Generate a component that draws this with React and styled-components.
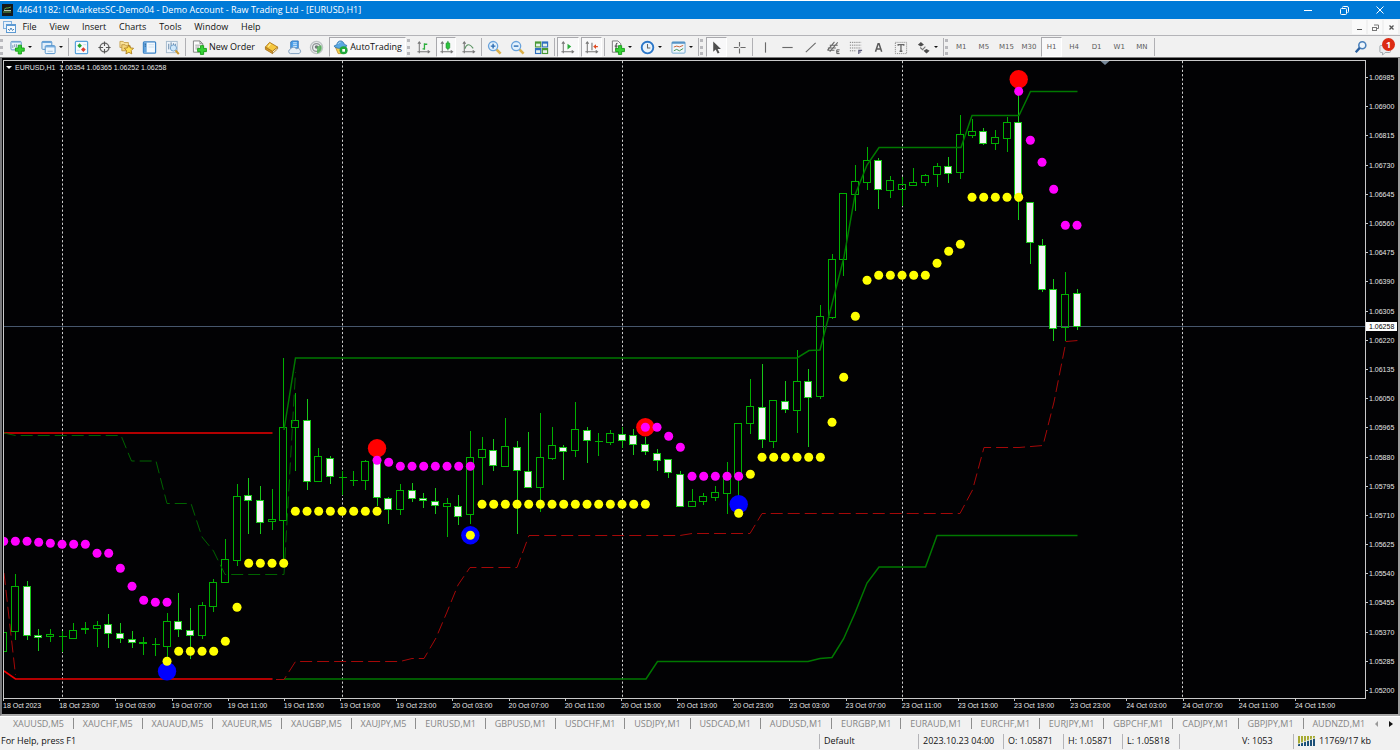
import React from "react";
import styled, { createGlobalStyle, css } from "styled-components";

const GlobalStyle = createGlobalStyle`
  *, *::before, *::after { box-sizing: border-box; }
  html, body, #root { margin: 0; padding: 0; }
  body {
    background: #f1f1f1;
    color: #111;
    font-family: "Open Sans", "Noto Sans", sans-serif;
    font-size: 9px;
    line-height: 12px;
  }
  button {
    margin: 0;
    padding: 0;
    border: 0;
    background: none;
    color: inherit;
    font: inherit;
  }
  svg { display: block; flex: none; }
`;

/* ---------- layout ---------- */

const Window = styled.div`
  display: flex;
  flex-direction: column;
  min-height: 100vh;
  overflow: hidden;
`;

const TitleBar = styled.header`
  display: flex;
  align-items: center;
  height: 19px;
  padding-left: 2px;
  border-top: 1px solid #fff;
  background: #007ad7;
  color: #fff;
  white-space: nowrap;
`;

const Title = styled.h1`
  flex: 1;
  margin: 0 0 0 4px;
  font-size: 9px;
  font-weight: 400;
`;

const WindowButtons = styled.div`
  display: flex;
  padding-right: 2px;
`;

const WindowButton = styled.button`
  display: flex;
  align-items: center;
  justify-content: center;
  width: 36px;
  height: 17px;
`;

const MenuBar = styled.nav`
  display: flex;
  align-items: center;
  height: 17px;
  padding-left: 3px;
  border-bottom: 1px solid #b4b4b8;
`;

const MenuItem = styled.button`
  flex: 1 1 auto;
  height: 16px;
`;

const MdiButton = styled.button`
  display: flex;
  align-items: center;
  justify-content: center;
  width: 14px;
  height: 14px;
  margin-right: 2px;
  background: #fafafa;
`;

const Toolbar = styled.div`
  display: flex;
  align-items: stretch;
  height: 22px;
  border-bottom: 1px solid #7a7a7a;
  background: #f1f1f1;
`;

const Grip = styled.span`
  width: 5px;
  margin: 3px 0 2px;
  border-left: 3px dotted #b9b9bd;
  border-right: 2px solid transparent;
`;

const Group = styled.div`
  display: flex;
  align-items: stretch;
  flex: 0 0 ${(p) => p.$width}px;
`;

const Divider = styled.span`
  width: 1px;
  margin: 2px 1px 1px 1px;
  background: #b0b0b4;
`;

const Spacer = styled.span`
  flex: 1;
`;

const Tool = styled.button`
  display: flex;
  align-items: center;
  justify-content: center;
  flex: 1 1 0;
  min-width: 0;
  gap: 2px;
  margin: 1px 1px 0;
  white-space: nowrap;
  border: 1px solid transparent;
  ${(p) =>
    p.$pressed &&
    css`
      border-color: #a9a9ad #fff #fff #a9a9ad;
      background: #f8f8f9;
    `}
`;

const SplitTool = styled(Tool)`
  gap: 3px;
  &::after {
    content: "";
    border: 2px solid transparent;
    border-top-color: #111;
    border-bottom: 0;
  }
`;

const Period = styled(Tool)`
  color: #5c5c5c;
  font-family: "DejaVu Sans", sans-serif;
  font-size: 7px;
`;

const Notifications = styled.button`
  position: relative;
  width: 26px;
  padding: 4px 0 0 5px;
`;

const Badge = styled.span`
  position: absolute;
  top: 2px;
  right: 5px;
  width: 13px;
  height: 13px;
  border-radius: 50%;
  background: #dc2a12;
  color: #fff;
  font-weight: 700;
  line-height: 13px;
  text-align: center;
`;

const ChartWindow = styled.main`
  display: grid;
  grid-template-columns: 1fr 32px;
  grid-template-rows: 1fr 15px;
  flex: 1;
  min-height: 0;
  padding: 2px 0 0 1px;
  border-left: 2px solid #77777a;
  border-right: 2px solid #9a9a9a;
  border-bottom: 2px solid #a8a8a8;
  background: #020204;
  color: #e6e6e6;
  font-family: "Liberation Sans", Arial, sans-serif;
  font-size: 7px;
  line-height: 9px;
`;

const Plot = styled.section`
  position: relative;
  min-height: 320px;
  border: 1px solid #c9c9c9;
`;

const PlotSvg = styled.svg`
  position: absolute;
  inset: 0;
  width: 100%;
  height: 100%;
`;

const PlotCaption = styled.div`
  position: absolute;
  top: 2px;
  left: 2px;
  display: flex;
  align-items: center;
  gap: 3px;
  white-space: pre;
  &::before {
    content: "";
    border: 3px solid transparent;
    border-top-color: #fff;
    border-bottom: 0;
  }
`;

const PriceAxis = styled.div`
  position: relative;
  grid-row: 1 / span 2;
  grid-column: 2;
  display: flex;
  flex-direction: column;
  padding: 3px 0 9px;
`;

const Price = styled.span`
  display: flex;
  align-items: center;
  flex: 1;
  gap: 1px;
  &::before {
    content: "";
    width: 2px;
    height: 1px;
    background: #c9c9c9;
  }
`;

const PriceTag = styled.strong`
  position: absolute;
  top: 40%;
  left: 0;
  right: 1px;
  padding-left: 3px;
  background: #fff;
  color: #000;
  font-weight: 400;
`;

const TimeAxis = styled.div`
  display: flex;
  padding-right: 15px;
`;

const Time = styled.span`
  flex: 1 1 0;
  min-width: 0;
  white-space: nowrap;
  &::before {
    content: "";
    display: block;
    width: 1px;
    height: 2px;
    background: #c9c9c9;
  }
`;

const ChartTabs = styled.nav`
  display: flex;
  align-items: center;
  height: 16px;
  padding: 0 0 2px 4px;
  border-top: 1px solid #fff;
  color: #858585;
  white-space: nowrap;
`;

const TabList = styled.div`
  display: flex;
  flex: 1;
`;

const ChartTab = styled.button`
  flex: 1 1 auto;
  height: 11px;
  line-height: 11px;
  border-right: 1px solid #8e8e8e;
  &:last-of-type { border-right: 0; }
`;

const TabArrows = styled.div`
  display: flex;
  gap: 11px;
  padding-right: 7px;
`;

const TabArrow = styled.button`
  width: 4px;
  height: 6px;
`;

const StatusBar = styled.footer`
  display: flex;
  align-items: center;
  height: 18px;
  padding-left: 1px;
  white-space: nowrap;
`;

const Status = styled.span`
  display: flex;
  align-items: center;
  gap: 3px;
  flex: 0 0 ${(p) => p.$width}px;
  height: 15px;
  padding-left: ${(p) => (p.$indent ? 62 : 4)}px;
  border-left: 1px solid #b4b4b8;
`;

const StatusHelp = styled.span`
  flex: 1;
`;

/* ---------- icons ---------- */

const Icon = ({ size = 15, children }) => (
  <svg width={size} height={size} viewBox="0 0 16 16" fill="none" aria-hidden="true">
    {children}
  </svg>
);

const plus = (x, y) => (
  <path
    d={`M${x + 3} ${y}h3.400v3h3v3.400h-3v3h-3.400v-3h-3v-3.400h3z`}
    fill="#35d035"
    stroke="#0f9a0f"
    strokeWidth="0.9"
  />
);

const NewChartIcon = () => (
  <Icon>
    <rect x="1" y="1.500" width="11" height="9" rx="1" fill="#eaf3fb" stroke="#5b93c4" />
    <path d="M1.500 2.500h10" stroke="#8dbbe2" />
    <path d="M3 8.500V5.500M5 7.500V4.500M7 7.500V4.500" stroke="#7c96ae" />
    {plus(5.800, 5.500)}
  </Icon>
);
const ProfilesIcon = () => (
  <Icon>
    <rect x="1" y="1.500" width="10.500" height="8.500" rx="1" fill="#e3effa" stroke="#4e8fc9" />
    <path d="M1 2.500h10.500" stroke="#6ba6dc" strokeWidth="1.400" />
    <rect x="4.500" y="6" width="10.500" height="8.500" rx="1" fill="#eef6fd" stroke="#4e8fc9" />
    <path d="M4.500 7.200h10.500" stroke="#6ba6dc" strokeWidth="1.400" />
    <path d="M7 12h5.500" stroke="#9db9d2" />
  </Icon>
);
const MarketWatchIcon = () => (
  <Icon>
    <rect x="1.500" y="1.500" width="13" height="13" rx="1" fill="#f6fafd" stroke="#5ba3dc" strokeWidth="1.300" />
    <path d="M3.500 6L6 3.500l2.500 2.500L6 8.500z" fill="#22a52c" />
    <path d="M7.500 10.200L10 7.700l2.500 2.500-2.500 2.500z" fill="#e23d2d" />
    <path d="M10 5h3M3.500 11h2.500" stroke="#c5d7e6" />
  </Icon>
);
const TargetIcon = () => (
  <Icon>
    <circle cx="8" cy="8" r="4.700" stroke="#666" strokeWidth="1.500" />
    <path d="M8 1.500v5M8 9.500v5M1.500 8h5M9.500 8h5" stroke="#555" strokeWidth="1.200" />
  </Icon>
);
const NavigatorIcon = () => (
  <Icon>
    <path d="M1 1.500h3.500l1 1.200h4.500v5.300H1z" fill="#f9e29a" stroke="#c49c48" strokeWidth=".9" />
    <path d="M3 5h3.500l1 1.200H12v5.300H3z" fill="#f6d67a" stroke="#b98f3c" strokeWidth=".9" />
    <path d="M10.500 5.200l1.500 3.200 3.500.4-2.500 2.500.6 3.500-3.100-1.700-3.100 1.700.6-3.500L5.500 8.800l3.500-.4z" fill="#ffe052" stroke="#a87717" strokeWidth=".9" />
  </Icon>
);
const TerminalIcon = () => (
  <Icon>
    <rect x="1.500" y="2" width="13" height="12" rx="1" fill="#f3f9fe" stroke="#3d84c6" strokeWidth="1.300" />
    <path d="M2 2.500h3v11H2z" fill="#62a3dd" />
    <path d="M3 4.500h1M3 6.500h1" stroke="#173f68" />
    <path d="M7 5h6M7 7.500h6" stroke="#cfe0ef" />
  </Icon>
);
const TesterIcon = () => (
  <Icon>
    <rect x="1.500" y="1.500" width="11.500" height="12" fill="#eff5fb" stroke="#a5bacd" />
    <path d="M4 10V4M6.500 7V2.500M9 7V3.500M11 7V4" stroke="#5d80a2" />
    <circle cx="9" cy="8.500" r="3.300" fill="#cfe8fb" stroke="#6f9fca" />
    <path d="M11.300 11l3.400 4" stroke="#c8962e" strokeWidth="2.200" />
  </Icon>
);
const OrderIcon = () => (
  <Icon>
    <path d="M1.500 1h7l3 3v9h-10z" fill="#fbfbfb" stroke="#808080" />
    <path d="M8.500 1v3h3" stroke="#808080" />
    <path d="M3.500 5.500h5M3.500 7.500h4M3.500 9.500h3" stroke="#8b8b8b" strokeWidth=".8" />
    {plus(6, 6)}
  </Icon>
);
const BookIcon = () => (
  <Icon>
    <path d="M1.500 7.500v2.500l7.500 4.500V12z" fill="#d99a25" stroke="#9c6a16" strokeWidth=".8" />
    <path d="M9 12v2.500l5.500-5V7.500z" fill="#fdf3cf" stroke="#9c6a16" strokeWidth=".8" />
    <path d="M1.500 7.500L6 2.500l8.500 5L9 12z" fill="#f6c83e" stroke="#a8731a" strokeWidth=".9" />
    <path d="M4.500 7L7 4.200" stroke="#fdeaa6" strokeWidth="1.200" />
  </Icon>
);
const CloudIcon = () => (
  <Icon>
    <path d="M4 2l1.500-1H12v8H4z" fill="#4da0ea" stroke="#2b71b8" strokeWidth=".9" />
    <path d="M6.500 3h4M6.500 5h4M6.500 7h4" stroke="#dceefd" />
    <path d="M3.500 14.500a2.400 2.400 0 0 1 0-4.600 3.500 3.500 0 0 1 6.300-.6 2.700 2.700 0 0 1 3.200 5.200z" fill="#e8eff6" stroke="#7b9cbd" />
  </Icon>
);
const SignalIcon = () => (
  <Icon>
    <circle cx="8" cy="8" r="6.500" stroke="#bfc3c5" strokeWidth="1.400" fill="#eceeee" />
    <circle cx="8" cy="8" r="4.200" stroke="#8d9296" strokeWidth="1.300" />
    <circle cx="8" cy="7.500" r="1.900" fill="#6f7a78" />
    <path d="M8.500 7.500A6 6 0 0 1 13 5.500c1.500 3.500.5 7-4.500 9z" fill="#4fb054" opacity=".8" />
  </Icon>
);
const AutoIcon = () => (
  <Icon>
    <path d="M2.500 7.500h10.500l-2 7H5.500z" fill="#f3cc52" stroke="#b98b22" strokeWidth=".8" />
    <path d="M1 6.500L4 5c.5-2.500 2-4 4-4s3.500 1.500 4 3.500l3 1.500c-2 3-11 4.500-14 .5z" fill="#5aa9e2" stroke="#2a6ea9" strokeWidth=".8" />
    <path d="M5.500 4c.5-1 1.500-1.700 2.500-1.700" stroke="#d0e8f8" />
    <circle cx="11.300" cy="11" r="4.300" fill="#1fa83a" />
    <path d="M9.900 9.600h2.900v2.900H9.900z" fill="#fff" />
  </Icon>
);
const Axes = () => (
  <path d="M3.500 2v12M1.500 12.500h13M2 4l1.500-2L5 4M12.500 11l2 1.500-2 1.500" stroke="#777" strokeWidth="1.100" />
);
const BarsIcon = () => (
  <Icon><Axes /><path d="M9 10.500V3.500M7 9.500h2M9 4.500h3" stroke="#2cae3c" strokeWidth="1.400" /></Icon>
);
const CandlesIcon = () => (
  <Icon><Axes /><path d="M9.500 1v10" stroke="#178a26" /><rect x="7.500" y="3" width="4" height="6" rx="1" fill="#2cc43e" stroke="#178a26" strokeWidth=".6" /></Icon>
);
const LineIcon = () => (
  <Icon><Axes /><path d="M4 9.500C6 4 9 3.500 13 9" stroke="#5d9565" strokeWidth="1.200" /></Icon>
);
const ZoomIcon = ({ plusSign }) => (
  <Icon>
    <path d="M10 10l4.500 4.500" stroke="#dbb04a" strokeWidth="2.800" />
    <circle cx="6.500" cy="6.500" r="4.900" fill="#e4f2fd" stroke="#6aa3dc" strokeWidth="1.400" />
    <path d={plusSign ? "M4 6.500h5M6.500 4v5" : "M4 6.500h5"} stroke="#2b6cb3" strokeWidth="1.500" />
  </Icon>
);
const TileIcon = () => (
  <Icon>
    {[[1, 1.500, "#4a9a35"], [8.300, 1.500, "#2f6fc0"], [1, 8.500, "#2f6fc0"], [8.300, 8.500, "#4a9a35"]].map(([x, y, c]) => (
      <g key={`${x}-${y}`}>
        <rect x={x} y={y} width="6.800" height="6.500" fill={c} />
        <rect x={x + 1.200} y={y + 2.400} width="4.400" height="2.900" fill="#e7f2ea" />
      </g>
    ))}
  </Icon>
);
const ScrollIcon = () => (
  <Icon><Axes /><path d="M8 4v6l4-3z" fill="#2bad3c" /></Icon>
);
const ShiftIcon = () => (
  <Icon><Axes /><path d="M8.500 3v8" stroke="#777" strokeWidth="1.200" /><path d="M9.800 7l3-2.500V6.300h2v1.400h-2v1.800z" fill="#e04a20" /></Icon>
);
const IndicatorIcon = () => (
  <Icon>
    <path d="M2.500 1h6l3 3v9h-9z" fill="#f7f7f7" stroke="#777" />
    <path d="M8 3.500c-2 0-1.500 2-1.500 7M5 6.500h3" stroke="#555" strokeWidth="1.200" />
    {plus(6, 6)}
  </Icon>
);
const ClockIcon = () => (
  <Icon>
    <circle cx="8" cy="8" r="6.200" fill="#e9f3fb" stroke="#2a76c8" strokeWidth="2" />
    <path d="M8 4.300V8.500h3" stroke="#666" strokeWidth="1.100" />
  </Icon>
);
const TemplateIcon = () => (
  <Icon>
    <rect x="1" y="2" width="14" height="12" rx="1" fill="#eff6fb" stroke="#6ea6d2" />
    <path d="M1 3h14" stroke="#5593c6" strokeWidth="2" />
    <path d="M3 7.500l3-1 3 .8 4-1.500" stroke="#ca5b2c" />
    <path d="M3 11.500l3-1.500 3 1.500 4-2.500" stroke="#3c8f4d" />
  </Icon>
);
const CursorIcon = () => (
  <Icon><path d="M4.500 1.500v11l2.700-2.300 2 4.300 2-1-2-4h3.600z" fill="#4f4f4f" /></Icon>
);
const CrossIcon = () => (
  <Icon><path d="M8 2v5M8 9v5.500M2 8h5M9 8h5.500" stroke="#6a6a6a" strokeWidth="1.200" /></Icon>
);
const Stroke = ({ d }) => (
  <Icon><path d={d} stroke="#6a6a6a" strokeWidth="1.200" /></Icon>
);
const ChannelIcon = () => (
  <Icon>
    <path d="M1.500 11L9 2M4 12.500l8.500-10M2 8.500h8.500M4 5.500h8.500M2 11h7" stroke="#666" strokeWidth="1.100" />
    <path d="M14.500 10.500h-3v4h3M11.500 12.500H14" stroke="#555" />
  </Icon>
);
const FiboIcon = () => (
  <Icon>
    <path d="M2 2.500h12M2 5.500h12M2 8.500h12M2 11.500h7" stroke="#777" strokeDasharray="1.300 1" />
    <path d="M11.500 15v-4H15M11.500 12.800H14" stroke="#5a5a7a" strokeWidth="1.200" />
  </Icon>
);
const TextIcon = () => (
  <Icon><path d="M4.800 12.500l2.800-8.500h1l2.800 8.500M6 9.700h4.200" stroke="#5a5a5a" strokeWidth="1.600" /></Icon>
);
const LabelIcon = () => (
  <Icon>
    <rect x="2.500" y="2.500" width="12" height="12" stroke="#888" strokeDasharray="1.200 1" />
    <path d="M5.500 6V4.900h6V6M8.500 5v7M7 12h3" stroke="#666" strokeWidth="1.400" />
  </Icon>
);
const ArrowsIcon = () => (
  <Icon>
    <path d="M2 5l3.200-3L8.500 5 5.200 7z" fill="#4c4c4c" />
    <path d="M4.500 8l2.500 2.300L10 7" stroke="#777" strokeWidth="1.100" />
    <path d="M8 11.500l3.200-2 3.300 2-3.300 3z" fill="#4c4c4c" />
  </Icon>
);

const AppIcon = () => (
  <svg width="11" height="12" viewBox="0 0 11 12" aria-hidden="true">
    <rect width="11" height="12" fill="#16191a" />
    <path d="M2 5.500l2-1.500h2l3-1M1 8h8" stroke="#5ea64a" fill="none" />
    <path d="M2 6.500h7" stroke="#b8c4b8" />
  </svg>
);
const ChildIcon = () => (
  <svg width="13" height="12" viewBox="0 0 13 12" fill="none" aria-hidden="true">
    <rect x=".5" y=".5" width="8" height="7" fill="#e6f1fb" stroke="#7fb0de" />
    <rect x="3.500" y="3.500" width="9" height="8" fill="#f6fafd" stroke="#5d9ad3" />
    <path d="M3.500 4.500h9" stroke="#5d9ad3" />
    <path d="M5 8l1.500 1.500L8 7l1.500 2.500L11 8" stroke="#4b83b7" />
  </svg>
);
const SearchIcon = () => (
  <Icon size={14}>
    <circle cx="9.500" cy="6" r="4" stroke="#4a80bb" strokeWidth="1.800" fill="#eef6fc" />
    <path d="M6.500 9L2 14" stroke="#2a5f9e" strokeWidth="2.600" />
  </Icon>
);
const BubbleIcon = () => (
  <Icon size={14}>
    <path d="M2 4h10a1 1 0 0 1 1 1v6a1 1 0 0 1-1 1H7l-3 3v-3H2a1 1 0 0 1-1-1V5a1 1 0 0 1 1-1z" fill="#e9ecef" stroke="#9aa2a8" />
  </Icon>
);
const TrafficIcon = () => (
  <svg width="18" height="12" viewBox="0 0 18 12" aria-hidden="true">
    {[0, 3, 6, 9, 12, 15].map((x, i) => (
      <g key={x}>
        <rect x={x} y="1" width="2" height="10" fill="#a7ab34" />
        <rect x={x} y={9 - i} width="2" height={2 + i} fill="#1c5078" />
      </g>
    ))}
    <path d="M0 9L18 2.500" stroke="#e8eef0" strokeWidth=".8" />
  </svg>
);

/* ---------- chart data ---------- */

/* [high, body top, body bottom, low, falling] in plot units, one entry per bar */
const CANDLES = [
  [629, 632, 651, 678], [574, 586, 631, 639], [581, 586, 635, 639, 1], [629, 635, 637, 650, 1],
  [629, 634, 636, 641], [631, 636, 636, 651], [623, 630, 638, 638], [622, 628, 629, 633],
  [621, 625, 628, 646], [614, 624, 633, 647, 1], [623, 633, 638, 642, 1], [631, 639, 642, 647, 1],
  [637, 642, 643, 654], [638, 644, 644, 655], [613, 621, 646, 659], [593, 621, 629, 636, 1],
  [608, 630, 635, 658, 1], [602, 605, 635, 638], [579, 582, 606, 611], [539, 559, 582, 582],
  [484, 496, 560, 565], [478, 495, 500, 533, 1], [486, 500, 522, 533, 1], [489, 519, 521, 529],
  [358, 427, 520, 560], [393, 420, 427, 470], [399, 420, 481, 489, 1], [448, 456, 481, 481],
  [456, 458, 476, 483, 1], [471, 477, 477, 494], [471, 480, 480, 485], [460, 461, 480, 489],
  [458, 461, 497, 505, 1], [497, 498, 509, 523, 1], [484, 490, 509, 514], [483, 490, 498, 501, 1],
  [493, 498, 500, 507, 1], [488, 501, 505, 513, 1], [498, 503, 506, 536], [495, 506, 516, 524, 1],
  [431, 457, 514, 523], [437, 449, 457, 484], [439, 450, 465, 470, 1], [418, 446, 466, 466],
  [441, 447, 470, 533, 1], [432, 471, 487, 487, 1], [413, 457, 487, 511], [427, 445, 458, 459],
  [445, 447, 451, 479, 1], [402, 429, 450, 456], [427, 430, 440, 462, 1], [433, 441, 441, 455],
  [430, 433, 442, 444], [427, 434, 440, 447, 1], [429, 435, 444, 454, 1], [437, 444, 451, 454, 1],
  [449, 453, 460, 470, 1], [459, 459, 472, 477, 1], [471, 474, 506, 506, 1], [489, 501, 506, 506],
  [493, 496, 501, 504], [486, 492, 497, 500], [462, 476, 493, 513], [423, 423, 476, 496],
  [379, 406, 423, 433], [364, 407, 439, 447, 1], [400, 400, 441, 447], [381, 401, 409, 412, 1],
  [350, 381, 410, 432], [369, 381, 397, 446, 1], [305, 316, 396, 398], [254, 259, 317, 318],
  [193, 193, 259, 275], [165, 181, 194, 210], [147, 160, 182, 189], [158, 160, 189, 208, 1],
  [176, 180, 190, 197], [177, 184, 189, 205], [168, 182, 185, 185], [174, 175, 182, 185],
  [163, 166, 174, 186], [157, 166, 173, 182, 1], [115, 134, 172, 178], [119, 131, 135, 137],
  [128, 131, 143, 144, 1], [130, 137, 143, 149], [117, 122, 138, 151], [92, 122, 197, 219, 1],
  [202, 202, 242, 263, 1], [239, 245, 289, 291, 1], [279, 289, 328, 340, 1], [272, 294, 327, 340],
  [289, 293, 326, 329, 1],
];

/* [first bar, last bar, y] */
const MAGENTA = [
  [0, 2, 541], [3, 3, 542], [4, 4, 543], [5, 7, 544], [8, 9, 553], [10, 10, 568], [11, 11, 586],
  [12, 12, 600], [13, 14, 602], [32, 32, 460], [33, 33, 462], [34, 40, 466], [55, 56, 427],
  [57, 57, 436], [58, 58, 447], [59, 63, 476], [87, 87, 91], [88, 88, 140], [89, 89, 162],
  [90, 90, 189], [91, 92, 225],
];
const YELLOW = [
  [14, 14, 661], [15, 18, 651], [19, 19, 641], [20, 20, 607], [21, 24, 563], [25, 32, 511],
  [40, 40, 535], [41, 55, 504], [63, 63, 513], [64, 64, 474], [65, 70, 457], [71, 71, 422],
  [72, 72, 377], [73, 73, 316], [74, 74, 280], [75, 79, 275], [80, 80, 263], [81, 81, 251],
  [82, 82, 244], [83, 87, 197],
];
const SELL = [[32, 448], [55, 427], [87, 79]];
const BUY = [[14, 671], [40, 535], [63, 504]];

const barX = (i) => 3.7 + (i * 35) / 3;

const Dots = ({ runs, fill }) =>
  runs.flatMap(([from, to, y]) =>
    Array.from({ length: to - from + 1 }, (_, k) => (
      <circle key={`${from + k}`} cx={barX(from + k)} cy={y + 0.3} r="4.500" fill={fill} />
    ))
  );

const Candle = ({ i, data: [high, top, bottom, low, falling] }) => {
  const x = Math.round(barX(i) - 0.3);
  const color = falling ? "#18c818" : "#00b000";
  return (
    <g stroke={color} shapeRendering="crispEdges">
      <path d={`M${x + 0.5} ${high}V${top}M${x + 0.5} ${bottom}V${low + 1}`} />
      {bottom - top < 1 ? (
        <path d={`M${x - 3.500} ${top + 0.5}h8`} />
      ) : (
        <rect x={x - 3.500} y={top + 0.5} width="7" height={bottom - top} fill={falling ? "#f6f4f8" : "none"} />
      )}
    </g>
  );
};

const Chart = () => (
  <PlotSvg viewBox="4 61 1361 637" preserveAspectRatio="none" fill="none" role="img" aria-label="EURUSD H1 candlestick chart">
    <path d="M4 326.500H1365" stroke="#46566c" />
    {[62.500, 342.500, 622.500, 902.500, 1182.500].map((x) => (
      <path key={x} d={`M${x} 61V698`} stroke="#d0d0d0" strokeDasharray="2.200 2.170" />
    ))}
    <path d="M1100.500 61h9l-4.500 4z" fill="#778899" />
    {CANDLES.map((c, i) => (
      <Candle key={i} i={i} data={c} />
    ))}
    <g stroke="#ee0000" strokeWidth="1.700">
      <path d="M4 433H272.500" />
      <path d="M4 671L15.500 679H272.500" />
    </g>
    <g stroke="#007800" strokeWidth="1.500">
      <path d="M284 430L295.500 358H797L809 350.500L820 350L832 304L844 257L855 195L867 165L879 147.500H961L972 115.500H1019L1030.500 91.500H1077.500" />
      <path d="M284 679H646L657.500 661.500H808L820 658.500L832 657.500L843.500 639L855 613L867 583L879 567H925.500L937 535.500H1077.500" />
    </g>
    <path
      d="M4 433L15.500 435.500H121L131.500 461H156L167 503.500H191L202 537L213.500 551L225 574.500H284L295.500 372"
      stroke="#006400"
      strokeDasharray="12 5"
    />
    <g stroke="#a40808" strokeDasharray="12 5">
      <path d="M4 573L15.500 675" />
      <path d="M276 679.500H284L295.500 661.500H400L412 658.500H424L436 638L447 612L458 585L470 567.500H517L529 535.500H680L692 533.500H750L762 513.500H960L972.500 490L984 447.500H1019L1043 445.500L1054 402L1066 341.500L1078 340.500" />
    </g>
    {SELL.map(([i, y]) => <circle key={i} cx={barX(i)} cy={y + 0.3} r="9.200" fill="#ff0000" />)}
    {BUY.map(([i, y]) => <circle key={i} cx={barX(i)} cy={y + 0.3} r="9.200" fill="#0000ff" />)}
    <Dots runs={MAGENTA} fill="#ff00ff" />
    <Dots runs={YELLOW} fill="#ffff00" />
  </PlotSvg>
);

const PRICES = Array.from({ length: 22 }, (_, i) => (1.06985 - i * 0.00085).toFixed(5));

const HOURS = ["03:00", "07:00", "11:00", "15:00", "19:00", "23:00"];
const TIMES = [
  "18 Oct 2023",
  "18 Oct 23:00",
  ...["19 Oct", "20 Oct", "23 Oct"].flatMap((d) => HOURS.map((h) => `${d} ${h}`)),
  ...HOURS.slice(0, 4).map((h) => `24 Oct ${h}`),
];

const TABS = [
  "XAUUSD,M5", "XAUCHF,M5", "XAUAUD,M5", "XAUEUR,M5", "XAUGBP,M5", "XAUJPY,M5", "EURUSD,M1",
  "GBPUSD,M1", "USDCHF,M1", "USDJPY,M1", "USDCAD,M1", "AUDUSD,M1", "EURGBP,M1", "EURAUD,M1",
  "EURCHF,M1", "EURJPY,M1", "GBPCHF,M1", "CADJPY,M1", "GBPJPY,M1", "AUDNZD,M1",
];

const MENUS = ["File", "View", "Insert", "Charts", "Tools", "Window", "Help"];
const PERIODS = ["M1", "M5", "M15", "M30", "H1", "H4", "D1", "W1", "MN"];

const ToolGroup = ({ width, items, as: Kind = Tool, pressed = [] }) => (
  <Group $width={width}>
    {items.map(([label, icon]) => (
      <Kind key={label} aria-label={label} $pressed={pressed.includes(label)}>
        {icon}
      </Kind>
    ))}
  </Group>
);

export default function App() {
  return (
    <Window>
      <GlobalStyle />
      <TitleBar>
        <AppIcon />
        <Title>44641182: ICMarketsSC-Demo04 - Demo Account - Raw Trading Ltd - [EURUSD,H1]</Title>
        <WindowButtons>
          <WindowButton aria-label="Minimize">
            <svg width="8" height="8" stroke="#fff"><path d="M0 4.500h8" /></svg>
          </WindowButton>
          <WindowButton aria-label="Restore">
            <svg width="9" height="9" stroke="#fff" fill="none">
              <rect x=".5" y="2.500" width="6" height="6" rx="1" />
              <path d="M2.500 1.500Q2.500.5 3.500.5H7q1.500 0 1.500 1.500v3.500q0 1-1 1" />
            </svg>
          </WindowButton>
          <WindowButton aria-label="Close">
            <svg width="8" height="8" stroke="#fff"><path d="M.5.5l7 7M7.500.5l-7 7" /></svg>
          </WindowButton>
        </WindowButtons>
      </TitleBar>

      <MenuBar>
        <ChildIcon />
        <Group $width={251}>
          {MENUS.map((m) => <MenuItem key={m}>{m}</MenuItem>)}
        </Group>
        <Spacer />
        <MdiButton aria-label="Minimize chart">
          <svg width="5" height="7" stroke="#555"><path d="M0 5.500h5" /></svg>
        </MdiButton>
        <MdiButton aria-label="Restore chart">
          <svg width="7" height="7" stroke="#777" fill="none">
            <rect x=".5" y="3.500" width="4" height="3" /><path d="M2 1h4.500v3.500h-1.500" />
          </svg>
        </MdiButton>
        <MdiButton aria-label="Close chart">
          <svg width="5" height="5" stroke="#555" strokeWidth="1.300"><path d="M.5.5l4 4M4.500.5l-4 4" /></svg>
        </MdiButton>
      </MenuBar>

      <Toolbar role="toolbar" aria-label="Main toolbar">
        <Grip />
        <ToolGroup width={62} as={SplitTool} items={[["New chart", <NewChartIcon />], ["Profiles", <ProfilesIcon />]]} />
        <Divider />
        <ToolGroup
          width={114}
          items={[
            ["Market Watch", <MarketWatchIcon />],
            ["Data Window", <TargetIcon />],
            ["Navigator", <NavigatorIcon />],
            ["Terminal", <TerminalIcon />],
            ["Strategy Tester", <TesterIcon />],
          ]}
        />
        <Divider />
        <Group $width={73}>
          <Tool><OrderIcon />New Order</Tool>
        </Group>
        <ToolGroup
          width={68}
          items={[["MetaEditor", <BookIcon />], ["Virtual Hosting", <CloudIcon />], ["Signals", <SignalIcon />]]}
        />
        <Group $width={79}>
          <Tool $pressed><AutoIcon />AutoTrading</Tool>
        </Group>
        <Grip />
        <ToolGroup
          width={68}
          pressed={["Candlesticks"]}
          items={[["Bar Chart", <BarsIcon />], ["Candlesticks", <CandlesIcon />], ["Line Chart", <LineIcon />]]}
        />
        <Divider />
        <ToolGroup
          width={70}
          items={[["Zoom In", <ZoomIcon plusSign />], ["Zoom Out", <ZoomIcon />], ["Tile Windows", <TileIcon />]]}
        />
        <Divider />
        <ToolGroup
          width={47}
          pressed={["Auto Scroll", "Chart Shift"]}
          items={[["Auto Scroll", <ScrollIcon />], ["Chart Shift", <ShiftIcon />]]}
        />
        <Divider />
        <ToolGroup
          width={91}
          as={SplitTool}
          items={[["Indicators", <IndicatorIcon />], ["Periods", <ClockIcon />], ["Templates", <TemplateIcon />]]}
        />
        <Divider />
        <Grip />
        <ToolGroup width={46} pressed={["Cursor"]} items={[["Cursor", <CursorIcon />], ["Crosshair", <CrossIcon />]]} />
        <Divider />
        <ToolGroup
          width={158}
          items={[
            ["Vertical Line", <Stroke d="M8 2.500v11" />],
            ["Horizontal Line", <Stroke d="M2.500 8h11" />],
            ["Trendline", <Stroke d="M3 13L13.500 3" />],
            ["Equidistant Channel", <ChannelIcon />],
            ["Fibonacci Retracement", <FiboIcon />],
            ["Text", <TextIcon />],
            ["Text Label", <LabelIcon />],
          ]}
        />
        <ToolGroup width={30} as={SplitTool} items={[["Arrows", <ArrowsIcon />]]} />
        <Divider />
        <Grip />
        <Group $width={203}>
          {PERIODS.map((p) => <Period key={p} $pressed={p === "H1"}>{p}</Period>)}
        </Group>
        <Divider />
        <Spacer />
        <Group $width={26}>
          <Tool aria-label="Search"><SearchIcon /></Tool>
        </Group>
        <Notifications aria-label="Notifications">
          <BubbleIcon />
          <Badge>1</Badge>
        </Notifications>
      </Toolbar>

      <ChartWindow>
        <Plot>
          <Chart />
          <PlotCaption>{"EURUSD,H1  1.06354 1.06365 1.06252 1.06258"}</PlotCaption>
        </Plot>
        <PriceAxis>
          {PRICES.map((p) => <Price key={p}>{p}</Price>)}
          <PriceTag>1.06258</PriceTag>
        </PriceAxis>
        <TimeAxis>
          {TIMES.map((t) => <Time key={t}>{t}</Time>)}
        </TimeAxis>
      </ChartWindow>

      <ChartTabs aria-label="Open charts">
        <TabList>
          {TABS.map((t) => <ChartTab key={t}>{t}</ChartTab>)}
        </TabList>
        <TabArrows>
          <TabArrow aria-label="Previous tabs">
            <svg width="4" height="6"><path d="M4 0v6L1 3z" fill="#999" /></svg>
          </TabArrow>
          <TabArrow aria-label="Next tabs">
            <svg width="4" height="6"><path d="M0 0v6l4-3z" fill="#111" /></svg>
          </TabArrow>
        </TabArrows>
      </ChartTabs>

      <StatusBar>
        <StatusHelp>For Help, press F1</StatusHelp>
        <Status $width={99}>Default</Status>
        <Status $width={85}>2023.10.23 04:00</Status>
        <Status $width={60}>O: 1.05871</Status>
        <Status $width={59}>H: 1.05871</Status>
        <Status $width={57}>L: 1.05818</Status>
        <Status $width={114} $indent>V: 1053</Status>
        <Status $width={107}><TrafficIcon />11769/17 kb</Status>
      </StatusBar>
    </Window>
  );
}
